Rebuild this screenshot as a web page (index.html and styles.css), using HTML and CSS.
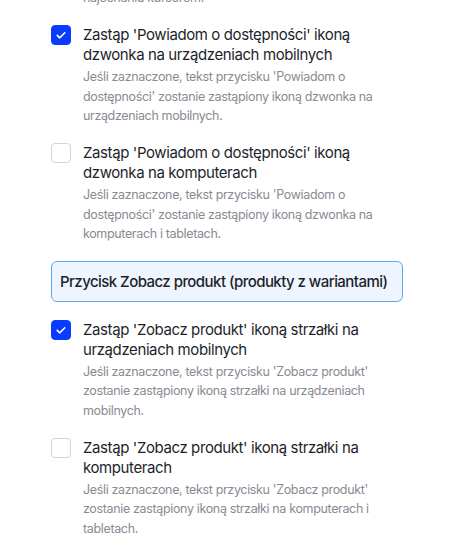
FILE: index.html
```html
<!DOCTYPE html>
<html lang="pl">
<head>
<meta charset="utf-8">
<link rel="stylesheet" href="styles.css">
</head>
<body>
<div class="panel">
  <p class="lead">najechaniu kursorem.</p>

  <div class="option">
    <span class="check on"><svg viewBox="0 0 20 20" width="20" height="20"><path d="M6.2 10.3l2.6 2.5 5-5" fill="none" stroke="#fff" stroke-width="1.6" stroke-linecap="round" stroke-linejoin="round"/></svg></span>
    <div class="text">
      <div class="title">Zastąp 'Powiadom o dostępności' ikoną dzwonka na urządzeniach mobilnych</div>
      <div class="desc">Jeśli zaznaczone, tekst przycisku 'Powiadom o dostępności' zostanie zastąpiony ikoną dzwonka na urządzeniach mobilnych.</div>
    </div>
  </div>

  <div class="option">
    <span class="check"></span>
    <div class="text">
      <div class="title">Zastąp 'Powiadom o dostępności' ikoną dzwonka na komputerach</div>
      <div class="desc">Jeśli zaznaczone, tekst przycisku 'Powiadom o dostępności' zostanie zastąpiony ikoną dzwonka na komputerach i tabletach.</div>
    </div>
  </div>

  <div class="section">Przycisk Zobacz produkt (produkty z wariantami)</div>

  <div class="option">
    <span class="check on"><svg viewBox="0 0 20 20" width="20" height="20"><path d="M6.2 10.3l2.6 2.5 5-5" fill="none" stroke="#fff" stroke-width="1.6" stroke-linecap="round" stroke-linejoin="round"/></svg></span>
    <div class="text">
      <div class="title">Zastąp 'Zobacz produkt' ikoną strzałki na urządzeniach mobilnych</div>
      <div class="desc">Jeśli zaznaczone, tekst przycisku 'Zobacz produkt' zostanie zastąpiony ikoną strzałki na urządzeniach mobilnych.</div>
    </div>
  </div>

  <div class="option">
    <span class="check"></span>
    <div class="text">
      <div class="title">Zastąp 'Zobacz produkt' ikoną strzałki na komputerach</div>
      <div class="desc">Jeśli zaznaczone, tekst przycisku 'Zobacz produkt' zostanie zastąpiony ikoną strzałki na komputerach i tabletach.</div>
    </div>
  </div>
</div>
</body>
</html>
```

FILE: styles.css
```css
html, body {
  margin: 0;
  padding: 0;
  background: #ffffff;
}
body {
  font-family: Inter, "Noto Sans", "Liberation Sans", sans-serif;
  overflow: hidden;
}
.panel {
  width: 352px;
  margin-left: 51px;
  margin-top: -12.5px;
  display: flex;
  flex-direction: column;
  gap: 17.5px;
}
.lead {
  margin: 0 0 0 32px;
  font-size: 12.5px;
  line-height: 20px;
  color: #8a8a93;
  letter-spacing: -0.3px;
}
.option {
  display: flex;
  gap: 12px;
  align-items: flex-start;
}
.check {
  flex: 0 0 20px;
  width: 20px;
  height: 20px;
  box-sizing: border-box;
  border: 1px solid #d4d4d8;
  border-radius: 4px;
  background: #fff;
  display: flex;
}
.check.on {
  background: #0a3cff;
  border-color: #0a3cff;
}
.check svg {
  margin: -1px;
}
.text {
  width: 320px;
  display: flex;
  flex-direction: column;
  gap: 2px;
}
.title {
  font-size: 15px;
  line-height: 20px;
  color: #1e1f2b;
  letter-spacing: -0.4px;
}
.desc {
  font-size: 12.5px;
  line-height: 19.5px;
  color: #8a8a93;
  letter-spacing: -0.35px;
}
.section {
  height: 41px;
  box-sizing: border-box;
  border: 1px solid #5aa8f5;
  border-radius: 6px;
  background: #eff5fe;
  padding: 0 8px;
  display: flex;
  align-items: center;
  font-size: 15px;
  font-weight: 500;
  color: #1e1f2b;
  letter-spacing: -0.55px;
}
```
